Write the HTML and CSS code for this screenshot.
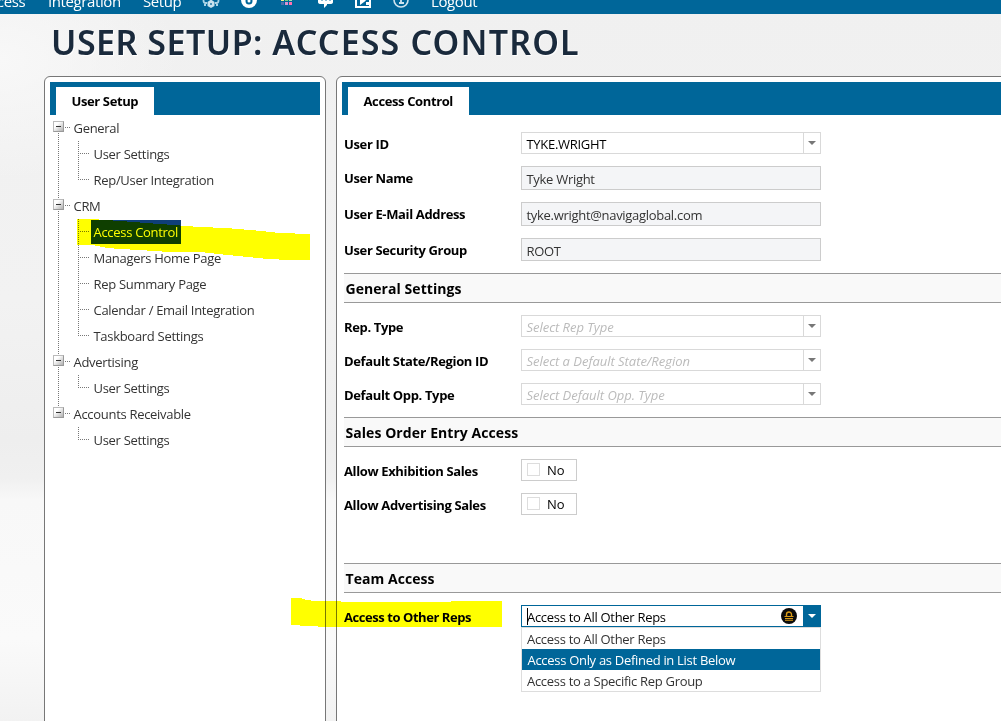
FILE: index.html
```html
<!DOCTYPE html>
<html lang="en">
<head>
<meta charset="utf-8">
<title>User Setup: Access Control</title>
<link rel="stylesheet" href="styles.css">
</head>
<body>
<header class="topbar">
  <nav class="nav">
    <a class="nav-access">Access</a>
    <a class="nav-integration">Integration</a>
    <a class="nav-setup">Setup</a>
    <span class="nav-icons">
      <svg width="18" height="16" viewBox="0 0 18 16"><path d="M5 10H3.500Q1.500 10 1.500 7.500T5 3h8q3.500 2 3.500 4.500T14.500 10H13" fill="none" stroke="#a9d3e6" stroke-width="1.8"/><path d="M9 6.500l3.500 2.500v4L9 15l-3.500-2V9z" fill="#c9e2ee"/><path d="M8 10h2v2H8z" fill="#4d94b8"/><path d="M3 11v2M15 11v2" stroke="#a9d3e6" stroke-width="2"/></svg>
      <svg width="18" height="16" viewBox="0 0 18 16"><circle cx="9" cy="7" r="8" fill="#fff"/><circle cx="9" cy="8" r="2.5" fill="none" stroke="#069" stroke-width="2"/><path d="M8 2h3v3H8z" fill="#069"/></svg>
      <svg width="18" height="16" viewBox="0 0 18 16"><path d="M3 5h3v3H3z" fill="#f3ee8a"/><path d="M7 5h3v3H7z" fill="#6fd77d"/><path d="M11 5h3v3h-3z" fill="#a4ddb0"/><path d="M3 9h3v3H3z" fill="#4c6eae"/><path d="M7 9h3v3H7z" fill="#d892d2"/><path d="M11 9h3v3h-3z" fill="#ff70b0"/></svg>
      <svg width="18" height="16" viewBox="0 0 18 16"><path d="M4 2h10q3 0 3 3v4q0 2-3 2h-3v1l-3 3v-4H5q-3 0-3-2V5q0-3 2-3z" fill="#fff"/><path d="M5 6h2v2H5zM9 6h2v2H9zM13 6h2v2h-2z" fill="#8dbdd5"/></svg>
      <svg width="18" height="16" viewBox="0 0 18 16"><path d="M2 1h14v13H2z" fill="none" stroke="#fff" stroke-width="2"/><path d="M6 3l6 4.500L6 12zM12 9h4v3h-4z" fill="#fff"/></svg>
      <svg width="18" height="16" viewBox="0 0 18 16"><circle cx="9" cy="7" r="7" fill="none" stroke="#cfe4ef" stroke-width="1.6"/><path d="M9 4v6M7 10h5" fill="none" stroke="#cfe4ef" stroke-width="1.8"/></svg>
    </span>
    <a class="nav-logout">Logout</a>
  </nav>
</header>

<h1 class="title"><span class="title-area">USER SETUP: </span><span class="title-page">ACCESS CONTROL</span></h1>

<main class="panels">
  <section class="panel panel-tree">
    <div class="tabs"><span class="tab tab-setup">User Setup</span></div>
    <ul class="tree">
      <li class="node"><div class="parent"><i class="toggle"></i><span>General</span></div>
        <ul class="children">
          <li class="leaf"><span>User Settings</span></li>
          <li class="leaf"><span>Rep/User Integration</span></li>
        </ul></li>
      <li class="node"><div class="parent"><i class="toggle"></i><span>CRM</span></div>
        <ul class="children">
          <li class="leaf"><span class="selected">Access Control</span></li>
          <li class="leaf"><span>Managers Home Page</span></li>
          <li class="leaf"><span>Rep Summary Page</span></li>
          <li class="leaf"><span>Calendar / Email Integration</span></li>
          <li class="leaf"><span>Taskboard Settings</span></li>
        </ul></li>
      <li class="node"><div class="parent"><i class="toggle"></i><span>Advertising</span></div>
        <ul class="children"><li class="leaf"><span>User Settings</span></li></ul></li>
      <li class="node"><div class="parent"><i class="toggle"></i><span>Accounts Receivable</span></div>
        <ul class="children"><li class="leaf"><span>User Settings</span></li></ul></li>
    </ul>
  </section>

  <section class="panel panel-form">
    <div class="tabs"><span class="tab tab-access">Access Control</span></div>
    <div class="group group-user">
      <div class="row"><label>User ID</label><div class="combo"><span class="value">TYKE.WRIGHT</span><i class="arrow"></i></div></div>
      <div class="row"><label>User Name</label><div class="readonly">Tyke Wright</div></div>
      <div class="row"><label>User E-Mail Address</label><div class="readonly">tyke.wright@navigaglobal.com</div></div>
      <div class="row"><label>User Security Group</label><div class="readonly last">ROOT</div></div>
    </div>
    <h2>General Settings</h2>
    <div class="group">
      <div class="row"><label>Rep. Type</label><div class="combo empty"><span class="value">Select Rep Type</span><i class="arrow"></i></div></div>
      <div class="row"><label>Default State/Region ID</label><div class="combo empty"><span class="value">Select a Default State/Region</span><i class="arrow"></i></div></div>
      <div class="row"><label>Default Opp. Type</label><div class="combo empty"><span class="value">Select Default Opp. Type</span><i class="arrow"></i></div></div>
    </div>
    <h2>Sales Order Entry Access</h2>
    <div class="group group-sales">
      <div class="row"><label>Allow Exhibition Sales</label><div class="check"><i class="box"></i>No</div></div>
      <div class="row"><label>Allow Advertising Sales</label><div class="check"><i class="box"></i>No</div></div>
    </div>
    <h2>Team Access</h2>
    <div class="group">
      <div class="row"><label class="label-team">Access to Other Reps</label>
        <div class="picker">
          <div class="combo open"><span class="value">Access to All Other Reps</span>
            <svg class="lock" width="16" height="16" viewBox="0 0 16 16"><circle cx="8" cy="8" r="8" fill="#0b0b0b"/><path d="M5.500 8V6.500a2.500 2.500 0 0 1 5 0V8" fill="none" stroke="#d99a16" stroke-width="1.4"/><path d="M3.500 8.500h9M4 10.500h8M4 12.200h8" stroke="#d99a16" stroke-width="1.1"/></svg>
            <i class="arrow"></i></div>
          <ul class="menu">
            <li>Access to All Other Reps</li>
            <li class="active">Access Only as Defined in List Below</li>
            <li>Access to a Specific Rep Group</li>
          </ul>
        </div>
      </div>
    </div>
  </section>
</main>

<svg class="marker" width="1001" height="721" viewBox="0 0 1001 721" fill="#ff0" shape-rendering="crispEdges">
  <path d="M77 219H92L120 221L160 224L200 227L226 228L262 231L279 233L310 234V260H290L268 259L248 257L228 255L200 252H169L140 250L120 249L107 248L92 245H77Z"/>
  <path d="M291 598H300L307 600L314 601H341V602H451V601H502V627H318V626H302L298 625H291Z"/>
</svg>
</body>
</html>
```
FILE: styles.css
```css
* { box-sizing: border-box; }
body {
  margin: 0;
  width: 1001px;
  height: 721px;
  overflow: hidden;
  background: radial-gradient(ellipse 180px 120px at 0 60px, #f8f8f8, transparent), linear-gradient(#f0f0f0 0, #f2f2f2 300px, #eeeeee 440px, #f0f0f0 478px, #f8f8f8 500px, #fafafa 640px, #f2f2f2 721px);
  font: 13px/20px "Open Sans", "Noto Sans", sans-serif;
  letter-spacing: -.3px;
  color: #333;
  white-space: nowrap;
}
ul { list-style: none; margin: 0; padding: 0; }
i { display: block; flex: none; }

.topbar { height: 14px; background: #006699; overflow: hidden; }
.nav { display: flex; align-items: center; height: 20px; margin: -9px 0 0 -19px; color: #fff; font-size: 15px; }
.nav a { flex: none; letter-spacing: -.4px; }
.nav-access { width: 67px; }
.nav-integration { width: 95px; }
.nav-setup { width: 59px; }
.nav-icons { display: flex; gap: 20px; width: 229px; }

.title {
  margin: 0;
  padding-left: 51px;
  height: 62px;
  font: 600 34px/56px "Noto Sans", "Open Sans", sans-serif;
  color: #1a2a3c;
  text-shadow: 1px 1px 1px #fff;
}
.title-area { letter-spacing: .5px; }
.title-page { letter-spacing: 1.15px; }

.panels { display: flex; gap: 10px; margin-left: 44px; }
.panel { flex: none; height: 660px; border: 1px solid #777; border-radius: 6px; background: #fff; padding: 5px; }
.panel-tree { width: 282px; }
.panel-form { width: 700px; }
.tabs { display: flex; align-items: flex-end; height: 33px; background: #006699; padding-left: 6px; }
.tab { height: 28px; background: #fff; color: #000; font-weight: 700; line-height: 28px; padding-left: 15.5px; letter-spacing: -.38px; }
.tab-setup { width: 98px; }
.tab-access { width: 121px; }

.node { padding-left: 8px; background: repeating-linear-gradient(#777 0 1px, transparent 1px 2px) 8px 0 / 1px 100% no-repeat; }
.node:first-child { background-position: 8px 12px; }
.node:last-child { background-size: 1px 12px; }
.parent { display: flex; align-items: center; height: 26px; margin-left: -5px; }
.toggle {
  width: 11px; height: 11px; margin: 0 0 3px;
  border: 1px solid #999;
  border-top-color: #bbb;
  border-left-color: #bbb;
  background: linear-gradient(#333, #333) center / 5px 1px no-repeat, linear-gradient(135deg, #fff 30%, #b0b0b0);
}
.parent span { padding-left: 9.5px; background: repeating-linear-gradient(90deg, transparent 0 1px, #777 1px 2px) 0 12px / 6px 1px no-repeat; line-height: 26px; }
.children { margin-left: 20px; }
.leaf {
  display: flex; align-items: center; height: 26px; padding-left: 13px;
  background: repeating-linear-gradient(#777 0 1px, transparent 1px 2px) 0 0 / 1px 100% no-repeat, repeating-linear-gradient(90deg, #777 0 1px, transparent 1px 2px) 0 12px / 11px 1px no-repeat;
}
.leaf:last-child { background-size: 1px 12px, 11px 1px; }
.leaf span { padding: 0 3px 0 2.5px; height: 24px; line-height: 24px; }
.leaf .selected { background: #0f3f79; color: #fff; }

.group { display: flex; flex-direction: column; gap: 12px; padding: 12px 0 12px 2px; }
.group-user { padding-top: 17px; }
.group-sales { padding-bottom: 48px; }
.row { display: flex; align-items: flex-start; }
.row label { width: 177px; height: 22px; flex: none; color: #000; font-weight: 700; letter-spacing: -.36px; line-height: 24px; }
.row .label-team { letter-spacing: -.44px; }
.combo { display: flex; width: 300px; height: 22px; border: 1px solid #d9d9d9; background: #fff; color: #000; }
.value { flex: 1; padding-left: 4.5px; line-height: 22px; }
.arrow { width: 17px; border-left: 1px solid #d9d9d9; background: #fff; display: flex; justify-content: center; align-items: center; }
.arrow::after { content: ""; border: 4px solid transparent; border-top: 4px solid #777; border-bottom: 0; }
.empty .value { color: #bbb; font-style: italic; letter-spacing: -.03px; }
.readonly { width: 300px; height: 24px; border: 1px solid #ccc; background: #f4f5f7; padding-left: 4.5px; line-height: 25px; }
.readonly.last { height: 23px; }

h2 { margin: 0 0 0 2px; height: 30px; border: solid #999; border-width: 1px 0; background: #f9f9f9; padding-left: 1.5px; font: 700 14px/29px "Open Sans", "Noto Sans", sans-serif; letter-spacing: .06px; color: #000; }
.check { display: flex; align-items: center; width: 56px; height: 22px; border: 1px solid #ccc; padding-left: 5px; color: #000; letter-spacing: -.1px; }
.box { width: 13px; height: 13px; border: 1px solid #ddd; margin: 0 7px 2px 0; }

.picker { width: 300px; }
.combo.open { border-color: #006699; }
.open .value { padding-left: 5px; line-height: 23px; }
.open .value::before { content: ""; float: left; width: 1px; height: 17px; margin: 2px -1px 0 0; background: #000; }
.lock { flex: none; margin: 2px 6px 0 0; }
.open .arrow { border: 0; background: #006699; }
.open .arrow::after { border-top-color: #fff; }
.menu { border: 1px solid #ddd; height: 65px; }
.menu li { height: 21px; line-height: 23px; padding-left: 5px; }
.menu .active { background: #006699; color: #fff; padding-left: 5.5px; }

.marker { position: absolute; left: 0; top: 0; mix-blend-mode: multiply; pointer-events: none; }
```
